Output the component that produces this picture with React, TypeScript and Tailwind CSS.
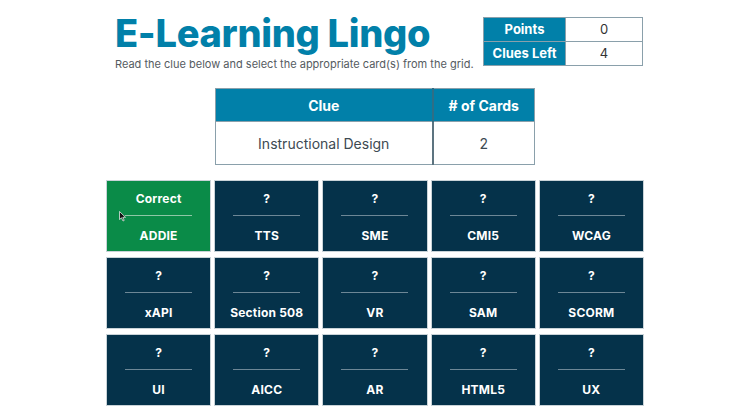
const cards = [
  { label: "ADDIE", correct: true },
  { label: "TTS" },
  { label: "SME" },
  { label: "CMI5" },
  { label: "WCAG" },
  { label: "xAPI" },
  { label: "Section 508" },
  { label: "VR" },
  { label: "SAM" },
  { label: "SCORM" },
  { label: "UI" },
  { label: "AICC" },
  { label: "AR" },
  { label: "HTML5" },
  { label: "UX" },
];

function Card({ label, correct }: { label: string; correct?: boolean }) {
  return (
    <div
      className={`relative h-[70px] flex flex-col items-center pt-[11px] text-white font-bold outline outline-1 outline-[#c9d3d8] ${
        correct ? "bg-[#0a8b48]" : "bg-[#05324a]"
      }`}
    >
      <div className="h-[13px] leading-[13px] text-[12px] tracking-[0.2px]">{correct ? "Correct" : "?"}</div>
      <div className={`mt-[10px] h-px w-[67px] ${correct ? "bg-[#8fc7a6]" : "bg-[#6d8796]"}`} />
      <div className="mt-[13px] h-[13px] leading-[13px] text-[12px] tracking-[0.2px]">{label}</div>
      {correct && (
        <svg className="absolute left-[12px] top-[30px]" width="8" height="11" viewBox="0 0 8 11">
          <path d="M0.5 0.5 L0.5 8.5 L2.5 6.8 L4 10 L5.2 9.4 L3.8 6.3 L6.5 6.3 Z" fill="#111" stroke="#fff" strokeWidth="0.7" />
        </svg>
      )}
    </div>
  );
}

export default function App() {
  return (
    <div className="w-[750px] h-[409px] bg-white overflow-hidden" style={{ fontFamily: "Inter, 'Liberation Sans', sans-serif" }}>
      <div className="w-[536px] mx-auto">
        <div className="flex justify-between pl-2 pt-[10px]">
          <div>
            <h1 className="text-[38px] leading-[46px] font-extrabold text-[#0180a9] tracking-[-0.3px] whitespace-nowrap">
              E-Learning Lingo
            </h1>
            <p className="mt-[1px] text-[11px] text-[#555b5f] leading-[14px] whitespace-nowrap">
              Read the clue below and select the appropriate card(s) from the grid.
            </p>
          </div>
          <table className="mt-[7px] h-[49px] w-[160px] border-collapse text-[13px] self-start">
            <tbody>
              <tr className="h-[24px]">
                <td className="w-[82px] bg-[#0180a9] text-white font-bold text-center border border-[#8aa0ab]">Points</td>
                <td className="text-center text-[#333] border border-[#8aa0ab]">0</td>
              </tr>
              <tr className="h-[24px]">
                <td className="bg-[#0180a9] text-white font-bold text-center border border-[#8aa0ab]">Clues Left</td>
                <td className="text-center text-[#333] border border-[#8aa0ab]">4</td>
              </tr>
            </tbody>
          </table>
        </div>

        <table className="mx-auto mt-[17px] w-[320px] border-collapse text-[14px]">
          <thead>
            <tr className="h-[33px] bg-[#0180a9] text-white font-bold">
              <th className="w-[217px] border border-[#8aa0ab]">Clue</th>
              <th className="border border-[#8aa0ab] border-l-2 border-l-[#2f6e86]">
                # of Cards
              </th>
            </tr>
          </thead>
          <tbody>
            <tr className="h-[43px] text-[#3d4a52]">
              <td className="text-center border border-[#8aa0ab]">Instructional Design</td>
              <td className="text-center border border-[#8aa0ab] border-l-2 border-l-[#5d7480]">2</td>
            </tr>
          </tbody>
        </table>

        <div className="mt-[16px] grid grid-cols-5 gap-x-[5px] gap-y-[7px]">
          {cards.map((c) => (
            <Card key={c.label} label={c.label} correct={c.correct} />
          ))}
        </div>
      </div>
    </div>
  );
}
